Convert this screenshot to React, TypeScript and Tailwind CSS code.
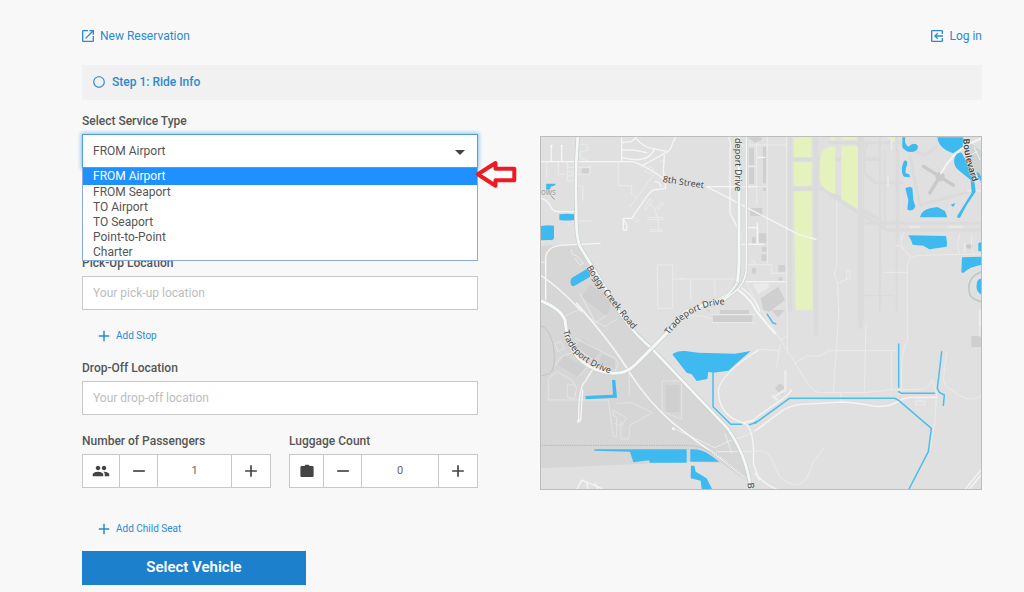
import { useState } from "react";
import type { ReactNode } from "react";
import {
  MdAdd,
  MdArrowDropDown,
  MdExitToApp,
  MdOpenInNew,
  MdPeople,
  MdRadioButtonUnchecked,
  MdRemove,
} from "react-icons/md";

const SERVICE_TYPES = [
  "FROM Airport",
  "FROM Seaport",
  "TO Airport",
  "TO Seaport",
  "Point-to-Point",
  "Charter",
];

const LABEL = "block text-xs leading-4 font-medium text-[#555]";
const FIELD =
  "mt-[5px] block h-[34px] w-full border border-[#c8c8c8] bg-white px-[10px] text-xs text-[#555] outline-none placeholder:text-[#bdbdbd]";

function BagIcon() {
  return (
    <svg viewBox="0 0 14 14" className="h-[14px] w-[14px]" fill="currentColor" aria-hidden="true">
      <path d="M5.4 .8h3.2l1 1.3h2.6c.8 0 1.4.6 1.4 1.4v8.2c0 .8-.6 1.4-1.4 1.4H1.8c-.8 0-1.4-.6-1.4-1.4V3.5c0-.8.6-1.4 1.4-1.4h2.6z" />
    </svg>
  );
}

function AddLink({ children }: { children: ReactNode }) {
  return (
    <button type="button" className="ml-[13px] flex items-center gap-[3px] text-[10px] leading-4 text-[#2b8ad0]">
      <MdAdd className="h-[18px] w-[18px]" aria-hidden="true" />
      {children}
    </button>
  );
}

type StepperProps = {
  id: string;
  label: string;
  icon: ReactNode;
  initial: number;
  columns: string;
};

function Stepper({ id, label, icon, initial, columns }: StepperProps) {
  const [value, setValue] = useState(initial);
  return (
    <div>
      <label htmlFor={id} className={LABEL}>
        {label}
      </label>
      <div
        className={`mt-[5px] grid h-[34px] divide-x divide-[#c8c8c8] border border-[#c8c8c8] bg-white text-[#444] ${columns}`}
      >
        <span className="flex items-center justify-center">{icon}</span>
        <button
          type="button"
          aria-label={`Decrease ${label}`}
          className="flex items-center justify-center"
          onClick={() => setValue(Math.max(0, value - 1))}
        >
          <MdRemove className="h-5 w-5" />
        </button>
        <input
          id={id}
          inputMode="numeric"
          className="w-full min-w-0 text-center text-[11px] text-[#666] outline-none"
          value={value}
          onChange={(e) => setValue(Number(e.target.value) || 0)}
        />
        <button
          type="button"
          aria-label={`Increase ${label}`}
          className="flex items-center justify-center"
          onClick={() => setValue(value + 1)}
        >
          <MdAdd className="h-5 w-5" />
        </button>
      </div>
    </div>
  );
}

function RouteMap() {
  return (
    <svg
      viewBox="541 137 440 352"
      className="block w-full border border-[#bdbdbd]"
      role="img"
      aria-label="Map of the pick-up area"
      strokeLinecap="round"
      strokeLinejoin="round"
    >
      <rect x="540" y="136" width="442" height="354" fill="#e0e0e0" />

      {/* Shaded industrial area in the south-west */}
      <g transform="translate(535 310) scale(.33333)">
        <path
          d="M10 -190Q22 -195 95 -195L128 -195 165 -125 215 -45 290 60 350 115 575 350 620 420 650 525 560 460 460 455 16 475z"
          fill="#d6d6d6"
        />
      </g>

      {/* Airfield pavement */}
      <g transform="translate(680 130) scale(.33333)" fill="none" stroke="#dbdbdb">
        <path d="M330 20V540M408 20V560" strokeWidth="14" />
        <path d="M330 88H600M330 176H430L600 270" strokeWidth="12" />
        <path d="M542 20V560" strokeWidth="20" />
        <path d="M600 20V540M650 20V540" strokeWidth="6" />
        <path d="M408 560V610M542 560V590" strokeWidth="14" />
      </g>
      <g transform="translate(830 130) scale(.33333)" fill="none" stroke="#dbdbdb" strokeWidth="9">
        <path d="M0 38H215L225 55 285 75 320 50M110 45Q95 80 105 130L135 158H215M240 80L270 225 420 185M0 195L170 300H455M95 280H455" />
        <path d="M165 60V290M205 60V320M100 497H190M150 480V540" strokeWidth="5" />
      </g>

      {/* Grass */}
      <g transform="translate(680 130) scale(.33333)" fill="#e5f2bd">
        <path d="M341 22H394V82H341zM341 97H394V165Q368 172 341 165zM342 184H395L398 540H347z" />
        <path d="M450 50H466V192Q420 180 420 140V90Q422 55 450 50zM484 50Q515 44 534 50V238L484 207zM450 22H466V29H450zM484 22H530V29H484zM620 22H645V38z" />
      </g>

      {/* Buildings */}
      <g fill="#cfcfcf">
        <g transform="translate(535 130) scale(.33333)">
          <path d="M140 115H163V132H140zM165 465L235 500 215 560 140 500z" />
        </g>
        <g transform="translate(680 130) scale(.33333)">
          <path d="M202 22H245V30L225 38zM207 54H222V105H207zM207 112H222V162H207zM249 50H258V160H249zM249 173H258V183H249zM211 234H247V258H211zM236 310H260V338H236zM216 322H227V340H216zM246 350H260V365H246zM244 373H260V393H244zM216 414H228V431H216zM295 405H315V425H295zM296 442H307V452H296zM242 505L295 470 315 510 268 545 250 540z" />
        </g>
        <g transform="translate(535 310) scale(.33333)">
          <path d="M143 87L195 125 175 150 122 112zM202 133L240 150V178L190 160zM88 135L150 172 130 202 68 165zM392 225H434V306H392zM555 0H642V12H555zM512 0H525V5zM534 16H652V36H534z" />
        </g>
        <g transform="translate(755 310) scale(.33333)">
          <path d="M60 235L75 220 97 238 80 257zM649 78H678V111H649zM50 0H90L68 22z" />
        </g>
      </g>
      <g transform="translate(680 130) scale(.33333)">
        <path d="M217 462L262 458 270 470 235 492z" fill="#e9eae9" />
      </g>
      <g transform="translate(830 130) scale(.33333)" stroke="#c9c9c9" strokeWidth="10" strokeLinecap="butt" fill="#c9c9c9">
        <path d="M277 107L330 140 373 168M330 140L297 192" />
        <circle cx="330" cy="140" r="9" />
        <ellipse cx="418" cy="349" rx="10" ry="6" strokeWidth="1" />
      </g>

      {/* Faint lot lines and service roads */}
      <g fill="none" stroke="#ebebeb" strokeWidth="3">
        <g transform="translate(535 130) scale(.33333)">
          <path d="M35 97V143M70 97V133H90M97 97V153H122M97 112H165M97 125H122M97 138H122M110 132H165V105M132 168H143V213M130 273H170M100 281V286M132 45L153 42 160 60 136 65V85L158 92" />
          <path d="M250 97V167H290V192L305 203M356 135L285 230M330 230L345 205 353 212 333 238zM368 230L380 216 384 222 372 238zM340 262H384V269H340zM345 299H380V305H345zM365 260Q365 235 343 220M370 270V300M292 258L313 272 305 278 288 264M368 405H413V535H370zM413 447H450" />
          <path d="M110 358Q105 375 125 377L145 400 135 405 120 385M135 490L180 575M18 397H30M345 110L357 117 345 132 330 125zM375 95Q395 85 387 105" />
        </g>
        <g transform="translate(680 130) scale(.33333)">
          <path d="M262 22V400M320 22V540M182 45H320M200 110H230M0 447H170M32 447V510M105 447V495M230 38V220M205 170H262M200 404H275V430H315M215 395Q222 385 225 402M200 460L240 540" />
        </g>
        <g transform="translate(830 130) scale(.33333)">
          <path d="M20 213V405L13 435 23 460 50 447V422H60V445L50 448M23 460L26 545M162 427H230M195 347H212L242 382M222 308Q205 335 220 358M390 310Q378 340 388 372M425 315Q420 340 430 370M232 545V405Q235 378 270 376L455 372" />
          <path d="M404 365V343M185 30V60M174 140V168M240 291H267M357 291H397M413 182H455" strokeWidth="5" />
        </g>
        <g transform="translate(535 310) scale(.33333)">
          <path
            stroke="#e4e4e4"
            d="M62 100L78 95 88 115 70 125zM62 165Q80 125 120 130M40 270V205L65 185 110 210 125 235 118 265 97 262V225H120M40 270H220L235 380H245V320L235 318V300L275 325 260 348 240 340M245 280L290 278 353 308 285 345 282 387H258V335M283 190V252M382 213H440V328L383 305zM165 25L210 50 245 28M180 40L215 15M85 20L130 0M122 85L240 145 250 160 240 185M120 110L175 150M130 200L175 150"
          />
          <path d="M420 357L540 413 585 392 640 375 690 345M545 425H650M440 18H500L530 26M530 14H660M530 38H660M570 370L590 430" />
        </g>
        <g transform="translate(755 310) scale(.33333)">
          <path d="M97 0V130M252 0L235 248M333 45L328 248M458 0V95Q435 115 440 240M423 122H220L195 138H155L118 160M77 90L100 75M75 105L65 170M0 130L15 118 72 122M410 125V238M20 0L165 230Q175 248 200 248H330L400 240 500 238Q530 230 532 208L545 250M258 250V275" />
          <path d="M575 125L565 210Q570 230 590 240 640 285 678 258M0 425Q30 415 45 440L75 500Q130 550 160 495L175 455 207 414M545 250L540 330 525 420M482 273H510V285H482zM495 265V273M674 50V80" />
          <path d="M91 183V240L55 262M53 258L65 268" strokeWidth="8" />
        </g>
      </g>

      {/* Streets */}
      <g fill="none" stroke="#f5f5f5" strokeWidth="4">
        <g transform="translate(535 130) scale(.33333)">
          <path d="M18 95H290Q315 97 385 145M260 22V95M260 38L288 35 305 22M260 60H295L335 68M260 82Q340 105 360 55M300 22Q330 55 350 55L398 65M320 108L398 65Q410 55 412 40L422 22M388 77L385 120 392 175 355 180Q340 190 325 215L290 265H265V300H275V285L267 270M360 155Q375 155 378 170" />
          <path d="M49 50V93M80 50V93M18 205Q40 210 50 235 55 245 75 245H122M32 510V380Q38 350 75 346L195 340M18 437Q70 470 140 545" />
          <circle cx="49" cy="48" r="2" />
          <circle cx="80" cy="48" r="2" />
        </g>
        <g transform="translate(680 130) scale(.33333)">
          <path d="M80 170L355 313 408 328M80 170H230M145 22Q155 35 150 60V250L182 310V343H250M197 22V200M200 293H233V340M233 82H255M232 280V343M200 455H315M170 465Q220 490 240 545" />
        </g>
        <g transform="translate(535 310) scale(.33333)">
          <path strokeWidth="5" d="M125 -20Q235 105 285 190 340 275 415 340 490 400 565 450L650 520" />
          <path d="M131 333Q130 230 150 215L178 170M137 330L143 240" />
          <path d="M670 120Q560 190 550 240 550 320 630 340 660 360 655 460L672 510M615 340L660 330M125 540L140 510 200 535M155 515L160 540M180 520L190 540" />
          <circle cx="131" cy="333" r="3" />
          <circle cx="415" cy="356" r="3" />
        </g>
        <g transform="translate(755 310) scale(.33333)">
          <path d="M0 325L95 258 110 240M0 362L85 300Q110 285 140 283L260 276Q320 280 360 289 400 292 430 275 445 262 475 262H545M0 490Q30 525 70 540M678 480L630 538M678 495L642 538M675 0V48" />
        </g>
      </g>

      {/* Arterial roads */}
      <g fill="none" transform="translate(535 130) scale(.33333)">
        <path d="M128 22Q120 130 124 240 122 320 135 350L215 480Q270 590 350 655L575 892Q640 980 650 1100" stroke="#c6d0cb" strokeWidth="12" />
        <path d="M128 22Q120 130 124 240 122 320 135 350L215 480Q270 590 350 655L575 892Q640 980 650 1100" stroke="#f6f8f7" strokeWidth="8" />
        <path d="M18 513Q75 535 90 570 95 620 110 655 145 720 235 730 275 730 300 705L385 620 450 545 505 525Q580 510 608 455L612 400V22" stroke="#c6d0cb" strokeWidth="13" />
        <path d="M18 513Q75 535 90 570 95 620 110 655 145 720 235 730 275 730 300 705L385 620 450 545 505 525Q580 510 608 455L612 400V22" stroke="#f6f8f7" strokeWidth="9" />
        <path d="M606 460Q575 510 535 518M634 22V420Q630 460 600 485L560 515" stroke="#c6d0cb" strokeWidth="8" />
        <path d="M606 460Q575 510 535 518M634 22V420Q630 460 600 485L560 515" stroke="#f6f8f7" strokeWidth="5" />
        <path d="M610 480Q650 510 665 545L720 610" stroke="#f6f8f7" strokeWidth="6" />
      </g>
      <g transform="translate(830 130) scale(.33333)" fill="none">
        <path d="M455 425Q405 445 420 495 430 510 455 515M405 22L455 60V170L430 120z" stroke="#bccac4" strokeWidth="5" />
        <path d="M405 22L455 60V170L430 120zM432 50L450 90M415 80L440 65" stroke="#f2f2f2" strokeWidth="3" fill="#cfd4d2" />
        <path d="M333 130Q365 70 420 40L455 25" stroke="#f4f4f4" strokeWidth="6" />
      </g>

      {/* Railway */}
      <g transform="translate(535 310) scale(.33333)" fill="none" stroke="#b5b5b5" strokeWidth="3">
        <path d="M20 406H455Q500 405 560 445L640 512" strokeDasharray="4 3" strokeLinecap="butt" />
        <path d="M18 48Q45 55 55 110 65 180 40 192L20 198" strokeDasharray="5 3" strokeWidth="2" />
      </g>

      {/* Water */}
      <g fill="#3fbaf0">
        <g transform="translate(535 130) scale(.33333)">
          <path d="M34 161H61V166L47 170 44 182 33 181zM73 253Q95 250 117 253V270Q95 273 73 270zM18 288Q40 284 57 287V325Q55 332 45 330L18 331zM110 444L155 417 165 427V440L118 468Q105 470 107 450z" />
          <path d="M36 183L58 208" stroke="#3fbaf0" strokeWidth="3" />
        </g>
        <g transform="translate(830 130) scale(.33333)">
          <path d="M217 22H226Q222 42 235 50 250 35 262 45 268 60 250 65 230 70 217 52zM222 92Q235 88 231 105 225 118 227 130L238 133 240 142 222 140Q214 132 216 110zM226 175Q238 168 247 173L250 210 256 230Q245 248 232 238L235 210zM270 262Q275 240 300 235L322 231 345 243 352 262zM362 224L376 219 370 231zM235 316L348 318Q352 335 350 350L298 358 280 347 248 344 244 332zM396 382L455 380V405Q420 410 400 429L394 427zM455 335V365L445 362V340zM455 445V495Q437 485 440 465 440 448 455 445z" />
          <path d="M322 22H400L398 50 370 70Q325 55 322 22zM372 90Q378 65 395 68L415 105 430 130 437 185 410 225 390 263Q380 266 382 257L425 188 422 150 385 120Q372 110 372 90zM440 125Q455 130 455 155L445 145z" />
        </g>
        <g transform="translate(535 310) scale(.33333)">
          <path d="M412 133Q425 122 450 123L490 128 600 131 647 123 610 155 580 182 535 188 520 185 517 207 485 213 470 193 455 188zM151 258L234 254 231 210H241L246 263 152 268zM178 418H455V458H345L342 451 295 457 285 425 178 422zM466 418Q500 416 525 435L553 455H466zM468 467H478L482 485 515 505 531 537H500L497 512 467 505z" />
        </g>
      </g>
      <g fill="none" stroke="#4dbdec" strokeWidth="4.5">
        <path transform="translate(535 310) scale(.33333)" d="M534 185V290L587 343H620M643 344Q655 342 665 334" />
        <path
          transform="translate(755 310) scale(.33333)"
          d="M0 340L103 265H420L432 272 529 355 520 425 462 537M431 102V232M431 245L440 250H538M560 125L547 235 553 247 568 255 565 286M37 13L53 38 62 41"
        />
      </g>

      {/* Street names */}
      <defs>
        <path id="road-8th" d="M662.5 182L712 189.5" />
        <path id="road-boggy" d="M586.5 268Q600 291 642 341" />
        <path id="road-trade-sw" d="M563 331Q570 364 622 377" />
        <path id="road-trade-mid" d="M669 335Q690 304 732 304" />
        <path id="road-trade-n" d="M734.5 138V200" />
        <path id="road-blvd" d="M963 139Q964 158 974 186" />
      </defs>
      <g
        fontFamily='"Noto Sans", "Open Sans", sans-serif'
        fontSize="9"
        fill="#444"
        stroke="#e9e9e9"
        strokeWidth="1"
        paintOrder="stroke"
      >
        <text><textPath href="#road-8th">8th Street</textPath></text>
        <text><textPath href="#road-boggy">Boggy Creek Road</textPath></text>
        <text><textPath href="#road-trade-sw">Tradeport Drive</textPath></text>
        <text><textPath href="#road-trade-mid">Tradeport Drive</textPath></text>
        <text><textPath href="#road-trade-n">deport Drive</textPath></text>
        <text fontWeight="600"><textPath href="#road-blvd">Boulevard</textPath></text>
        <text x="541" y="195" fontSize="8" fill="#999">ows</text>
        <text transform="translate(747.5 483) rotate(85)">B</text>
      </g>
    </svg>
  );
}

export default function App() {
  const [service, setService] = useState(SERVICE_TYPES[0]);

  return (
    <div className="min-h-screen bg-[#f8f8f8] pt-7 pr-[42px] pb-[7px] pl-[82px] font-['Roboto',sans-serif] text-xs text-[#555]">
      <header className="flex items-center justify-between leading-4 text-[#2b8ad0]">
        <a href="#new" className="-ml-[2px] flex items-center gap-1">
          <MdOpenInNew className="h-4 w-4" aria-hidden="true" />
          New Reservation
        </a>
        <a href="#login" className="flex items-center gap-1">
          <MdExitToApp className="h-4 w-4 -scale-x-100" aria-hidden="true" />
          Log in
        </a>
      </header>

      <h1 className="mt-[21px] flex h-[35px] items-center gap-[6px] bg-[#f1f1f1] px-[10px] pb-0.5 text-xs font-medium text-[#2b8ad0]">
        <MdRadioButtonUnchecked className="h-[14px] w-[14px]" aria-hidden="true" />
        Step 1: Ride Info
      </h1>

      <main className="mt-[13px] grid grid-cols-[396fr_442fr] items-start gap-x-[62px]">
        <form onSubmit={(e) => e.preventDefault()}>
          <label htmlFor="service" className={LABEL}>
            Select Service Type
          </label>
          <div className="relative mt-[5px]">
            <select
              id="service"
              value={service}
              onChange={(e) => setService(e.target.value)}
              className="block h-[34px] w-full appearance-none border border-[#4f9fd8] bg-white px-[10px] text-xs text-[#555] shadow-[0_0_4px_1px_#8cc4ec] outline-none"
            >
              {SERVICE_TYPES.map((type) => (
                <option key={type}>{type}</option>
              ))}
            </select>
            <MdArrowDropDown
              className="pointer-events-none absolute top-[6px] right-[6px] h-6 w-6 text-[#444]"
              aria-hidden="true"
            />
            <ul
              role="listbox"
              aria-label="Service types"
              className="absolute inset-x-0 top-full z-10 border border-t-0 border-[#8aa9dc] bg-white text-xs leading-[15px]"
            >
              {SERVICE_TYPES.map((type) => (
                <li
                  key={type}
                  role="option"
                  aria-selected={type === service}
                  onClick={() => setService(type)}
                  className={type === service ? "bg-[#1e90ff] px-[10px] pt-px pb-px text-white" : "px-[10px]"}
                >
                  {type}
                </li>
              ))}
            </ul>
            <svg
              viewBox="0 0 42 28"
              className="absolute top-[26px] left-full z-20 -ml-[3px] h-7 w-[42px]"
              fill="#fff"
              stroke="#ed1c24"
              strokeWidth="4"
              strokeLinejoin="round"
              aria-hidden="true"
            >
              <path d="M2.8 14.3L20.5 3V8.8H39.3V20.3H20.5V25.8z" />
            </svg>
          </div>

          <div className="mt-[87px]">
            <label htmlFor="pickup" className={LABEL}>
              Pick-Up Location
            </label>
            <input id="pickup" className={FIELD} placeholder="Your pick-up location" />
          </div>
          <div className="mt-[17px] h-4">
            <AddLink>Add Stop</AddLink>
          </div>

          <div className="mt-[17px]">
            <label htmlFor="dropoff" className={LABEL}>
              Drop-Off Location
            </label>
            <input id="dropoff" className={FIELD} placeholder="Your drop-off location" />
          </div>

          <div className="mt-[18px] grid grid-cols-2 gap-x-[18px]">
            <Stepper
              id="passengers"
              label="Number of Passengers"
              icon={<MdPeople className="h-[18px] w-[18px]" />}
              initial={1}
              columns="grid-cols-[37px_38px_1fr_38px]"
            />
            <Stepper
              id="luggage"
              label="Luggage Count"
              icon={<BagIcon />}
              initial={0}
              columns="grid-cols-[34px_38px_1fr_38px]"
            />
          </div>
          <div className="mt-8 h-4">
            <AddLink>Add Child Seat</AddLink>
          </div>

          <button
            type="submit"
            className="mt-[15px] block h-[34px] w-[224px] bg-[#1c80cc] text-[15px] font-semibold text-white"
          >
            Select Vehicle
          </button>
        </form>

        <div className="mt-[23px]">
          <RouteMap />
        </div>
      </main>
    </div>
  );
}
